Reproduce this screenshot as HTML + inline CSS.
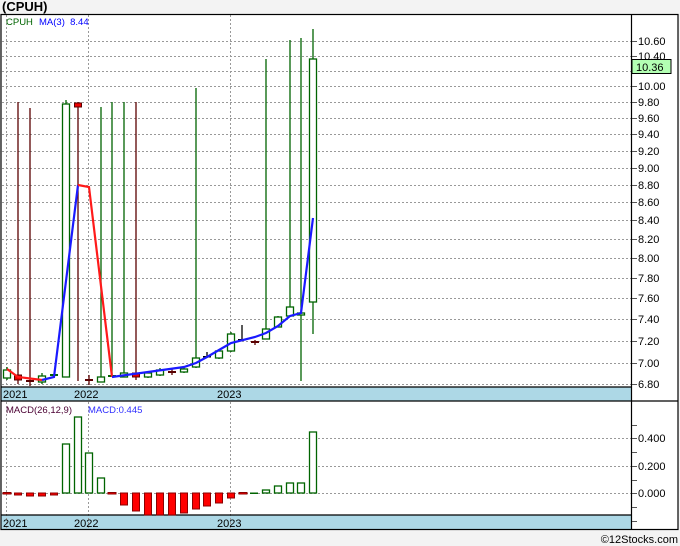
<!DOCTYPE html>
<html><head><meta charset="utf-8"><style>
body{margin:0;width:680px;height:546px;background:#f3f3f3;overflow:hidden;font-family:"Liberation Sans",sans-serif}
svg{position:absolute;left:0;top:0}
</style></head><body>
<svg width="680" height="546" xmlns="http://www.w3.org/2000/svg" font-family="Liberation Sans, sans-serif">
<rect x="0" y="0" width="680" height="546" fill="#f3f3f3"/>
<text x="2" y="11" font-size="13" font-weight="bold" fill="#000">(CPUH)</text>
<rect x="1" y="14" width="677" height="516" fill="#fff"/>
<rect x="1" y="387" width="631" height="14" fill="#add8e6"/>
<rect x="1" y="515" width="631" height="14" fill="#add8e6"/>
<g stroke="#999" stroke-dasharray="2,2" stroke-width="1">
<line x1="2" x2="632" y1="41.5" y2="41.5"/><line x1="2" x2="632" y1="56.5" y2="56.5"/><line x1="2" x2="632" y1="71.5" y2="71.5"/><line x1="2" x2="632" y1="86.5" y2="86.5"/><line x1="2" x2="632" y1="102.5" y2="102.5"/><line x1="2" x2="632" y1="118.5" y2="118.5"/><line x1="2" x2="632" y1="134.5" y2="134.5"/><line x1="2" x2="632" y1="151.5" y2="151.5"/><line x1="2" x2="632" y1="168.5" y2="168.5"/><line x1="2" x2="632" y1="185.5" y2="185.5"/><line x1="2" x2="632" y1="202.5" y2="202.5"/><line x1="2" x2="632" y1="220.5" y2="220.5"/><line x1="2" x2="632" y1="239.5" y2="239.5"/><line x1="2" x2="632" y1="258.5" y2="258.5"/><line x1="2" x2="632" y1="278.5" y2="278.5"/><line x1="2" x2="632" y1="298.5" y2="298.5"/><line x1="2" x2="632" y1="319.5" y2="319.5"/><line x1="2" x2="632" y1="341.5" y2="341.5"/><line x1="2" x2="632" y1="363.5" y2="363.5"/><line x1="2" x2="632" y1="384.5" y2="384.5"/>
<line x1="2" x2="632" y1="438.5" y2="438.5"/><line x1="2" x2="632" y1="466.5" y2="466.5"/><line x1="2" x2="632" y1="493.5" y2="493.5"/>
<line x1="6.5" x2="6.5" y1="15" y2="387"/><line x1="88.5" x2="88.5" y1="15" y2="387"/><line x1="230.5" x2="230.5" y1="15" y2="387"/>
<line x1="6.5" x2="6.5" y1="402" y2="529"/><line x1="88.5" x2="88.5" y1="402" y2="529"/><line x1="230.5" x2="230.5" y1="402" y2="529"/>
</g>
<g fill="none" stroke="#000" stroke-width="1.2">
<rect x="1" y="14.5" width="677" height="515"/>
<line x1="631.5" x2="631.5" y1="14" y2="530"/>
<line x1="1" x2="632" y1="387" y2="387"/><line x1="1" x2="678" y1="401" y2="401"/><line x1="1" x2="632" y1="515" y2="515"/>
</g>
<g stroke="#555" stroke-width="1">
<line x1="632" x2="637" y1="41.5" y2="41.5"/><line x1="632" x2="637" y1="56.5" y2="56.5"/><line x1="632" x2="637" y1="86.5" y2="86.5"/><line x1="632" x2="637" y1="102.5" y2="102.5"/><line x1="632" x2="637" y1="118.5" y2="118.5"/><line x1="632" x2="637" y1="134.5" y2="134.5"/><line x1="632" x2="637" y1="151.5" y2="151.5"/><line x1="632" x2="637" y1="168.5" y2="168.5"/><line x1="632" x2="637" y1="185.5" y2="185.5"/><line x1="632" x2="637" y1="202.5" y2="202.5"/><line x1="632" x2="637" y1="220.5" y2="220.5"/><line x1="632" x2="637" y1="239.5" y2="239.5"/><line x1="632" x2="637" y1="258.5" y2="258.5"/><line x1="632" x2="637" y1="278.5" y2="278.5"/><line x1="632" x2="637" y1="298.5" y2="298.5"/><line x1="632" x2="637" y1="319.5" y2="319.5"/><line x1="632" x2="637" y1="341.5" y2="341.5"/><line x1="632" x2="637" y1="363.5" y2="363.5"/><line x1="632" x2="637" y1="384.5" y2="384.5"/>
<line x1="632" x2="637" y1="425.5" y2="425.5"/><line x1="632" x2="637" y1="438.5" y2="438.5"/><line x1="632" x2="637" y1="452.5" y2="452.5"/><line x1="632" x2="637" y1="466.5" y2="466.5"/><line x1="632" x2="637" y1="480.5" y2="480.5"/><line x1="632" x2="637" y1="493.5" y2="493.5"/><line x1="632" x2="637" y1="507.5" y2="507.5"/><line x1="632" x2="637" y1="521.5" y2="521.5"/>
</g>
<g font-size="11" fill="#000">
<text x="638" y="45">10.60</text><text x="638" y="60">10.40</text><text x="638" y="90">10.00</text><text x="638" y="106">9.80</text><text x="638" y="122">9.60</text><text x="638" y="138">9.40</text><text x="638" y="155">9.20</text><text x="638" y="172">9.00</text><text x="638" y="189">8.80</text><text x="638" y="206">8.60</text><text x="638" y="224">8.40</text><text x="638" y="243">8.20</text><text x="638" y="262">8.00</text><text x="638" y="282">7.80</text><text x="638" y="302">7.60</text><text x="638" y="323">7.40</text><text x="638" y="345">7.20</text><text x="638" y="367">7.00</text><text x="638" y="388">6.80</text>
<text x="638" y="442">0.400</text><text x="638" y="470">0.200</text><text x="638" y="497">0.000</text>
</g>
<rect x="632" y="59.5" width="39" height="14" fill="#b3ffb3" stroke="#000"/>
<text x="636" y="71" font-size="11">10.36</text>
<g font-size="11" fill="#000"><text x="3" y="398">2021</text><text x="74" y="398">2022</text><text x="217" y="398">2023</text>
<text x="3" y="527">2021</text><text x="74" y="527">2022</text><text x="217" y="527">2023</text></g>
<text x="6" y="25" font-size="9.5" fill="#006400">CPUH</text>
<text x="39" y="25" font-size="9.5" fill="#0000ff">MA(3)&#160; 8.44</text>
<text x="6" y="413" font-size="9.5" fill="#4b0033">MACD(26,12,9)</text>
<text x="88" y="413" font-size="9.5" fill="#3030ff">MACD:0.445</text>
<text x="678" y="543" font-size="11" fill="#000" text-anchor="end">©12Stocks.com</text>
<!-- wicks -->
<g stroke-width="1.3">
<g stroke="#006400"><line x1="7" x2="7" y1="367" y2="380"/><line x1="42" x2="42" y1="373" y2="384"/><line x1="66" x2="66" y1="100" y2="377"/><line x1="101" x2="101" y1="107" y2="382"/><line x1="112" x2="112" y1="102" y2="376"/><line x1="124" x2="124" y1="102" y2="377"/><line x1="148" x2="148" y1="371" y2="378"/><line x1="160" x2="160" y1="368" y2="376"/><line x1="184" x2="184" y1="367" y2="373"/><line x1="196" x2="196" y1="88" y2="368"/><line x1="219" x2="219" y1="349" y2="359"/><line x1="231" x2="231" y1="332" y2="352"/><line x1="266" x2="266" y1="59" y2="339"/><line x1="278" x2="278" y1="316" y2="327"/><line x1="290" x2="290" y1="40" y2="316"/><line x1="301" x2="301" y1="38" y2="381"/><line x1="313" x2="313" y1="29" y2="334"/></g>
<g stroke="#5a0000"><line x1="18" x2="18" y1="102" y2="384"/><line x1="30" x2="30" y1="108" y2="386"/><line x1="78" x2="78" y1="102" y2="381"/><line x1="89" x2="89" y1="375" y2="385"/><line x1="136" x2="136" y1="102" y2="380"/><line x1="172" x2="172" y1="368" y2="375"/><line x1="255" x2="255" y1="340" y2="345"/></g>
<g stroke="#000"><line x1="207" x2="207" y1="352" y2="358"/><line x1="242" x2="242" y1="325" y2="341"/></g>
</g>
<!-- bodies -->
<g fill="#fff" stroke="#006400" stroke-width="1.3">
<rect x="3.5" y="370" width="7" height="8"/><rect x="38.5" y="376" width="7" height="6"/><rect x="62.5" y="104" width="7" height="273"/><rect x="97.5" y="377" width="7" height="5"/><rect x="120.5" y="373" width="7" height="4"/><rect x="144.5" y="373" width="7" height="4"/><rect x="156.5" y="370" width="7" height="5"/><rect x="180.5" y="369" width="7" height="3"/><rect x="192.5" y="358" width="7" height="9"/><rect x="215.5" y="351" width="7" height="7"/><rect x="227.5" y="334" width="7" height="17"/><rect x="262.5" y="329" width="7" height="10"/><rect x="274.5" y="317" width="7" height="10"/><rect x="286.5" y="307" width="7" height="9"/><rect x="297.5" y="313" width="7" height="2"/><rect x="309.5" y="59" width="7" height="243"/>
</g>
<g fill="#006400"><rect x="50" y="374" width="8" height="2"/><rect x="108" y="375" width="8" height="2"/></g>
<g fill="#e00" stroke="#5a0000" stroke-width="1"><rect x="14.5" y="375" width="7" height="5"/><rect x="74.5" y="103" width="7" height="4"/><rect x="132.5" y="373" width="7" height="4"/></g>
<g fill="#5a0000"><rect x="26" y="380" width="8" height="2"/><rect x="85" y="379" width="8" height="2"/><rect x="168" y="371" width="8" height="2"/><rect x="251" y="341" width="8" height="2"/></g>
<g fill="#000"><rect x="203" y="356" width="8" height="1.5"/><rect x="238" y="339" width="8" height="1.5"/></g>
<!-- MA -->
<polyline fill="none" stroke="#ff1a1a" stroke-width="2.2" points="7,369 18,377 42,380"/>
<polyline fill="none" stroke="#1a1aff" stroke-width="2.2" points="42,380 54,377 78,185"/>
<polyline fill="none" stroke="#ff1a1a" stroke-width="2.2" points="78,185 89,187 112,377"/>
<polyline fill="none" stroke="#1a1aff" stroke-width="2.2" points="112,377 148,372 184,367 196,363 207,357 219,350 231,343 255,337 266,333 278,326 290,316 301,313 313,218"/>
<!-- MACD -->
<g fill="#fff" stroke="#006400" stroke-width="1.3">
<rect x="62.5" y="444" width="7" height="49"/><rect x="74.5" y="417" width="7" height="76"/><rect x="85.5" y="453" width="7" height="40"/><rect x="97.5" y="478" width="7" height="15"/><rect x="262.5" y="490" width="7" height="3"/><rect x="274.5" y="486" width="7" height="7"/><rect x="286.5" y="483" width="7" height="10"/><rect x="297.5" y="483" width="7" height="10"/><rect x="309.5" y="432" width="7" height="61"/>
</g>
<rect x="250" y="492.5" width="8" height="1.5" fill="#006400"/>
<g fill="#f00" stroke="#8b0000" stroke-width="1">
<rect x="3" y="492.5" width="8" height="1.5"/><rect x="14.5" y="493" width="7" height="2"/><rect x="26.5" y="493" width="7" height="3"/><rect x="38.5" y="493" width="7" height="3"/><rect x="50.5" y="493" width="7" height="2"/><rect x="108" y="492.5" width="8" height="1.5"/>
<rect x="120.5" y="493" width="7" height="12"/><rect x="132.5" y="493" width="7" height="18"/><rect x="144.5" y="493" width="7" height="22"/><rect x="156.5" y="493" width="7" height="22"/><rect x="168.5" y="493" width="7" height="22"/><rect x="180.5" y="493" width="7" height="20"/><rect x="192.5" y="493" width="7" height="16"/><rect x="203.5" y="493" width="7" height="13"/><rect x="215.5" y="493" width="7" height="10"/><rect x="227.5" y="493" width="7" height="5"/><rect x="239" y="492.5" width="8" height="1.5"/>
</g>
</svg>
</body></html>
